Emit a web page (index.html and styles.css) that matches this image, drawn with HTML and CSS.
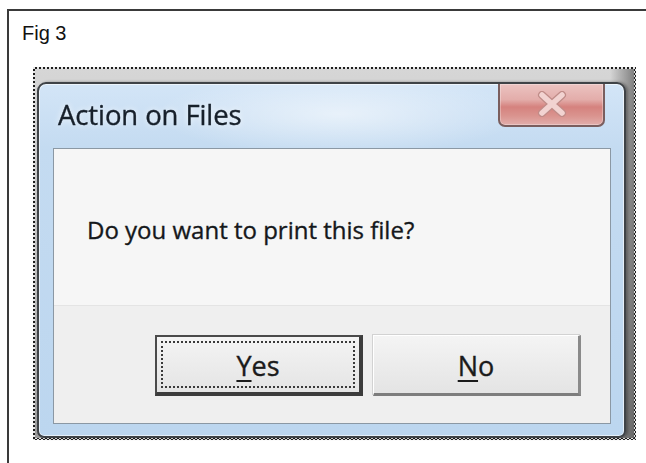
FILE: index.html
```html
<!DOCTYPE html>
<html lang="en">
<head>
<meta charset="utf-8">
<title>Fig 3</title>
<link rel="stylesheet" href="styles.css">
</head>
<body>
<div class="figure">
  <div class="fig-label">Fig 3</div>
  <div class="shot">
    <div class="glass">
      <div class="window">
        <div class="caption">
          <span class="title">Action on Files</span>
          <div class="close">
            <svg width="34" height="26" viewBox="0 0 34 26">
              <path d="M7 4 L27 22 M27 4 L7 22" stroke="#c08c88" stroke-width="8" stroke-linecap="round"/>
              <path d="M7 4 L27 22 M27 4 L7 22" stroke="#f2d3d1" stroke-width="5.5" stroke-linecap="round"/>
            </svg>
          </div>
        </div>
        <div class="panel">
          <div class="message">Do you want to print this file?</div>
          <div class="actions">
            <button class="btn btn-default"><span class="focus"><u>Y</u>es</span></button>
            <button class="btn"><span class="focus"><u>N</u>o</span></button>
          </div>
        </div>
      </div>
    </div>
  </div>
</div>
</body>
</html>
```

FILE: styles.css
```css
html, body {
  margin: 0;
  padding: 0;
  background: #ffffff;
  width: 646px;
  height: 463px;
  overflow: hidden;
}

.figure {
  margin: 9px 0 0 7px;
  width: 650px;
  height: 470px;
  border: 2px solid #3a3a3a;
  padding: 11px 0 0 13px;
  box-sizing: border-box;
}

.fig-label {
  font-family: "Liberation Sans", Arial, sans-serif;
  font-size: 20px;
  line-height: 23px;
  color: #111;
}

/* selection-style dotted outline around the captured dialog */
.shot {
  margin: 22px 0 0 11px;
  width: 603px;
  height: 373px;
  padding: 2px;
  box-sizing: border-box;
  background: repeating-conic-gradient(#1e1e1e 0 25%, #e6e6e6 0 50%) 0 0 / 4px 4px;
}

.glass {
  height: 100%;
  box-sizing: border-box;
  padding: 13px 8px 0 2px;
  display: flex;
  background:
    linear-gradient(90deg, rgba(0,0,0,0) 0 96%, rgba(60,60,60,0.55) 100%),
    linear-gradient(180deg, #d6d6d6 0%, #bdbdbd 60%, #9c9c9c 100%);
}

.window {
  flex: 1;
  display: flex;
  flex-direction: column;
  border: 2px solid #3f4347;
  border-radius: 9px 9px 7px 7px;
  background:
    radial-gradient(ellipse 260px 60px at 300px 30px, rgba(255,255,255,0.55), rgba(255,255,255,0) 70%),
    linear-gradient(180deg, #d3e5f7 0%, #c4dbf1 18%, #bcd6ef 100%);
  box-shadow: inset 0 0 0 1px rgba(255,255,255,0.6), 2px 0 3px rgba(0,0,0,0.35);
  filter: blur(0.4px);
}

.caption {
  height: 64px;
  display: flex;
  align-items: flex-start;
  justify-content: space-between;
  padding: 0 19px 0 19px;
}

.title {
  margin-top: 15px;
  font-family: "Open Sans", "Noto Sans", sans-serif;
  font-size: 27.5px;
  line-height: 31px;
  color: #17202b;
  letter-spacing: -0.1px;
  -webkit-text-stroke: 0.35px #17202b;
  text-shadow: 0 0 6px rgba(255,255,255,0.9);
}

.close {
  width: 107px;
  height: 43px;
  box-sizing: border-box;
  border: 2px solid #7a5e5e;
  border-top: none;
  border-radius: 0 0 7px 7px;
  background: linear-gradient(180deg, #ebc3c1 0%, #e3adaa 38%, #d5827e 56%, #da948f 78%, #e2aeab 100%);
  box-shadow: inset 0 0 0 1px rgba(255,255,255,0.3);
  display: flex;
  align-items: center;
  justify-content: center;
  padding-bottom: 2px;
}

.panel {
  flex: 1;
  margin: 0 13px 12px 14px;
  border: 1px solid #8b98a4;
  display: flex;
  flex-direction: column;
  background: #efefef;
}

.message {
  height: 157px;
  box-sizing: border-box;
  padding: 65px 0 0 33px;
  background: #f6f6f6;
  border-bottom: 1px solid #e4e4e4;
  font-family: "Open Sans", "Noto Sans", sans-serif;
  font-size: 24px;
  line-height: 32px;
  color: #15181b;
  -webkit-text-stroke: 0.35px #15181b;
}

.actions {
  flex: 1;
  display: flex;
  justify-content: flex-end;
  align-items: flex-start;
  gap: 10px;
  padding: 29px 29px 0 0;
}

.btn {
  width: 208px;
  height: 61px;
  padding: 4px;
  box-sizing: border-box;
  background: linear-gradient(180deg, #f4f4f4 0%, #ececec 50%, #e4e4e4 100%);
  border: 1px solid #ffffff;
  border-right: 3px solid #8a8a8a;
  border-bottom: 3px solid #7d7d7d;
  box-shadow: -1px -1px 0 #d2d2d2;
  font-family: "Open Sans", "Noto Sans", sans-serif;
  font-size: 27px;
  color: #1b1b1b;
  -webkit-text-stroke: 0.35px #1b1b1b;
  display: flex;
}

.btn .focus {
  flex: 1;
  display: flex;
  align-items: center;
  justify-content: center;
  border: 2px dotted transparent;
  line-height: 30px;
  padding-top: 2px;
}

.btn u {
  text-decoration-thickness: 2px;
  text-underline-offset: 4px;
}

.btn-default {
  border: 2px solid #4a4a4a;
  border-right: 4px solid #3c3c3c;
  border-bottom: 4px solid #3c3c3c;
  box-shadow: none;
}

.btn-default .focus {
  border-color: #3a3a3a;
}
```
